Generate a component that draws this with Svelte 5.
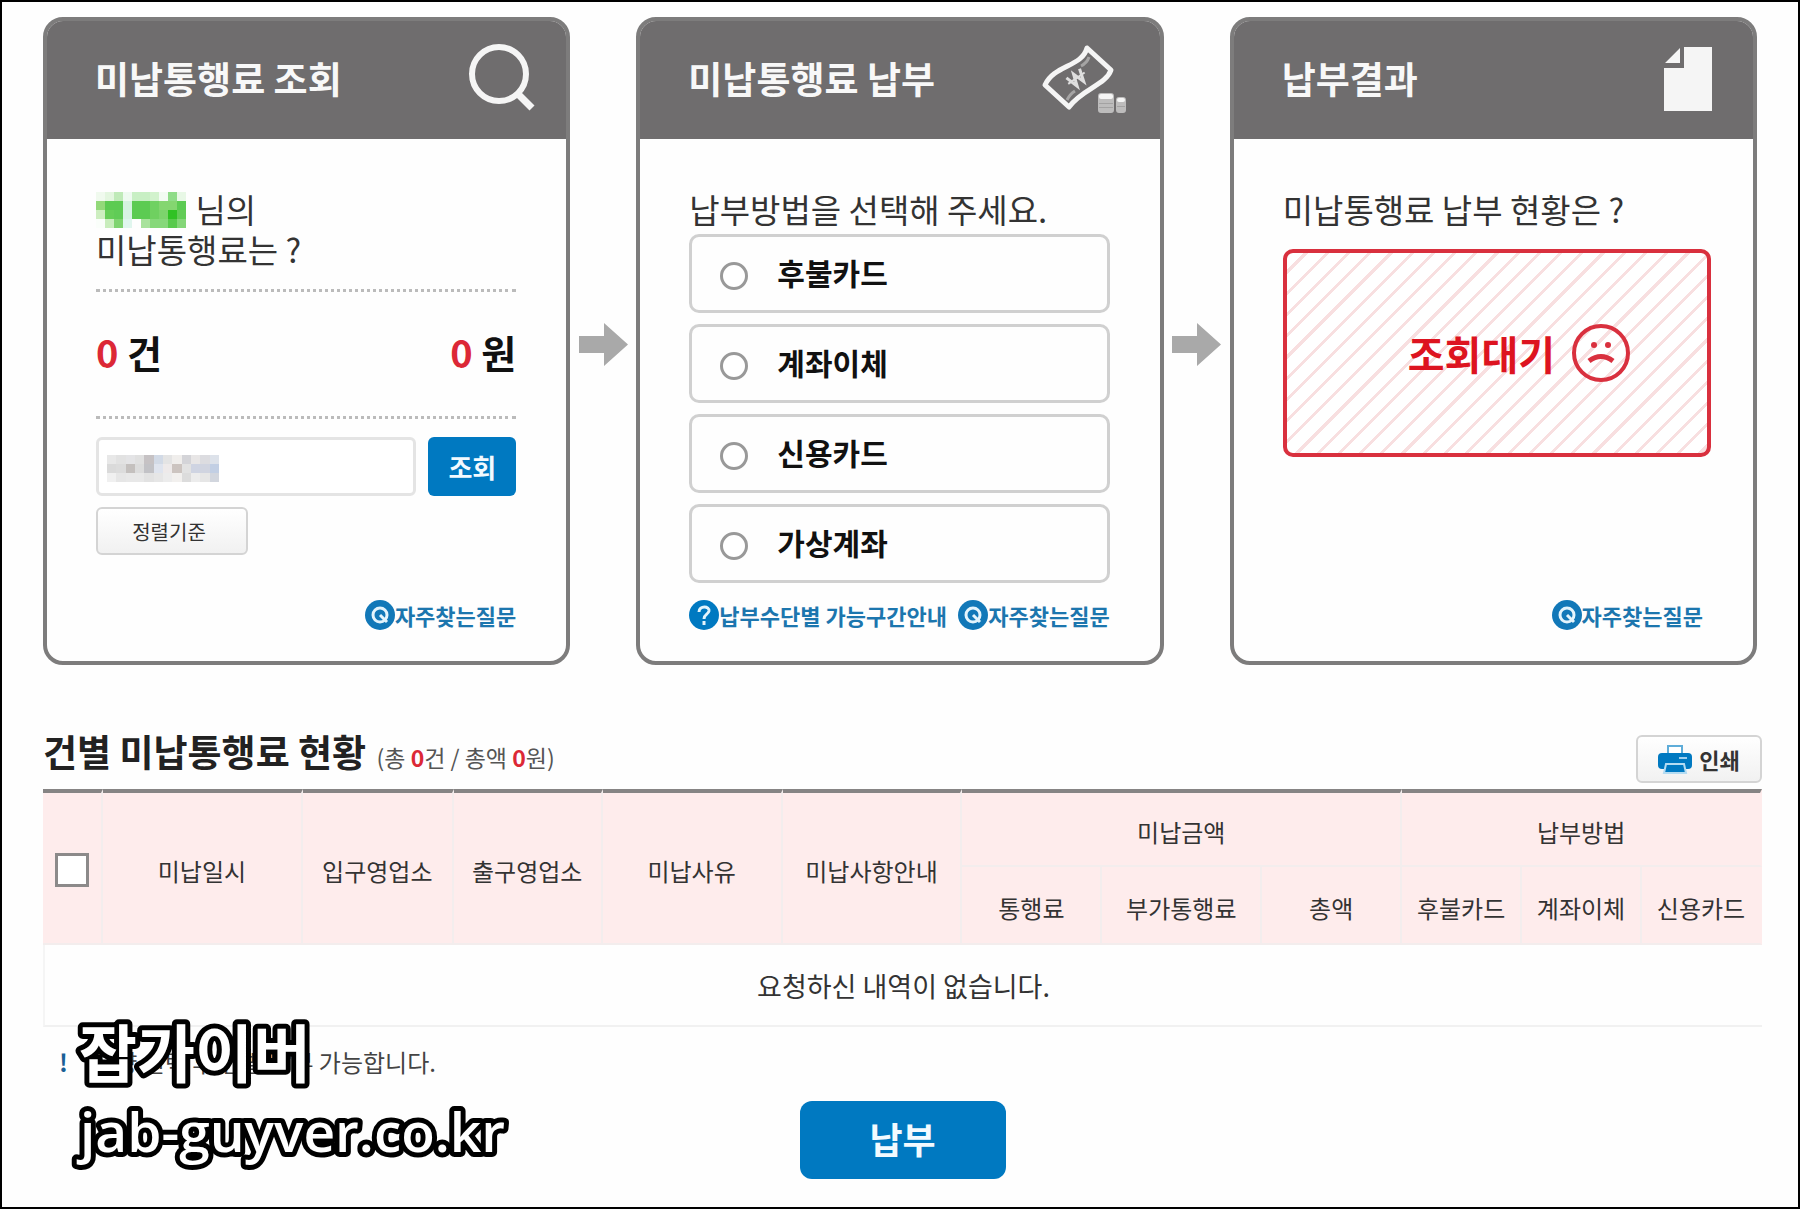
<script>
  const options = [
    { value: 'postpaid', label: '후불카드' },
    { value: 'transfer', label: '계좌이체' },
    { value: 'credit', label: '신용카드' },
    { value: 'virtual', label: '가상계좌' },
  ];
  const columnWidths = [60, 200, 151, 149, 180, 180, 140, 160, 140, 120, 120, 120];
  const totalWidth = columnWidths.reduce((sum, width) => sum + width, 0);
  const mainColumns = ['미납일시', '입구영업소', '출구영업소', '미납사유', '미납사항안내'];
  const subColumns = ['통행료', '부가통행료', '총액', '후불카드', '계좌이체', '신용카드'];

  // masked personal data, drawn as rows of coloured cells
  const nameMask = [
    ['#f0faee', '#e3f6df', '#bfeab8', '#eefaf0', '#c8efc4', '#c8efc4', '#d2f2cd', '#f2fbf2', '#8fdc88', '#e8f8e6'],
    ['#93d97a', '#5ccb52', '#5ccb52', '#d4f3de', '#5ccb52', '#5ccb52', '#70d162', '#84d670', '#84d670', '#5ccb52'],
    ['#cdeec0', '#66ce58', '#60cc56', '#d8f4e4', '#5ccb52', '#5ccb52', '#6fd060', '#7cd46c', '#30c224', '#62cc56'],
    ['#fafefa', '#c8edbc', '#7fd470', '#e0f6ee', '#fefefe', '#a8e29c', '#86d87a', '#86d87a', '#58ca4c', '#84d678'],
  ];
  const plateMask = [
    ['#e8e8e8', '#e2e2e2', '#e4e4e6', '#e0e0e0', '#c6c2c4', '#d2dae6', '#e4e4e4', '#f0eeec', '#d4d4d8', '#e8e6e6', '#dcdce0', '#dde2ea'],
    ['#dadada', '#dcdcdc', '#c4c0be', '#dcdcdc', '#c2c2c6', '#dfe4ee', '#eeeaea', '#ccc4c0', '#e2e2e2', '#cfd4e2', '#d0d4e0', '#c2cfe4'],
    ['#f0f0f0', '#e6e6e6', '#e8e8e8', '#e8e8e8', '#e2e2e2', '#e6e6e6', '#ececec', '#f2f0ee', '#dcdcdc', '#ececec', '#e6e6e6', '#d2d6de'],
  ];

  let method = '';
  let checkedAll = false;
  let plate = '';
</script>

{#snippet faq()}
  <a class="link" href="#faq">
    <svg width="30" height="30" viewBox="0 0 30 30" aria-hidden="true">
      <circle cx="15" cy="15" r="15" fill="#1278b8" />
      <circle cx="15" cy="15" r="7" fill="none" stroke="#e4f4fc" stroke-width="3" />
      <path d="M15 15l7 7" stroke="#e4f4fc" stroke-width="3" />
    </svg>자주찾는질문</a>
{/snippet}

{#snippet arrow()}
  <svg class="arrow" width="49" height="43" viewBox="0 0 49 43" aria-hidden="true">
    <path d="M0 13h25V0l24 21.500L25 43V30H0z" fill="#a9a9a9" />
  </svg>
{/snippet}

<div class="page">
  <main>
    <div class="steps">
      <section class="card">
        <header>
          <h2>미납통행료 조회</h2>
          <svg width="68" height="68" viewBox="0 0 68 68" fill="none" stroke="#f5f5f5" aria-hidden="true">
            <circle cx="31" cy="30" r="27" stroke-width="6" />
            <path d="M49 49l15 15" stroke-width="7" />
          </svg>
        </header>
        <div class="body">
          <p class="prompt">
            <svg class="mask" width="90" height="36" viewBox="0 0 10 4" preserveAspectRatio="none" shape-rendering="crispEdges" aria-hidden="true">
              {#each nameMask as row, y}
                {#each row as fill, x}
                  <rect {x} {y} width="1" height="1" {fill} />
                {/each}
              {/each}
            </svg>
            님의<br />미납통행료는 ?
          </p>
          <div class="totals">
            <strong><em>0</em> 건</strong>
            <strong><em>0</em> 원</strong>
          </div>
          <form class="search" on:submit|preventDefault>
            <div class="plate">
              <input type="text" aria-label="차량번호" bind:value={plate} />
              {#if !plate}
                <svg width="112" height="27" viewBox="0 0 12 3" preserveAspectRatio="none" shape-rendering="crispEdges" aria-hidden="true">
                  {#each plateMask as row, y}
                    {#each row as fill, x}
                      <rect {x} {y} width="1" height="1" {fill} />
                    {/each}
                  {/each}
                </svg>
              {/if}
            </div>
            <button class="primary">조회</button>
          </form>
          <button class="plain sort">정렬기준</button>
          <div class="links end">{@render faq()}</div>
        </div>
      </section>

      {@render arrow()}

      <section class="card">
        <header>
          <h2>미납통행료 납부</h2>
          <svg width="90" height="70" viewBox="0 0 90 70" fill="none" stroke="#f5f5f5" aria-hidden="true">
            <path d="M47 5L71 27C66 42 42 46 29 64L5 42C14 22 42 24 47 5z" stroke-width="5" stroke-linejoin="round" />
            <g transform="rotate(-35 37 36)" stroke="#dedede" stroke-width="3">
              <path d="M29 29l4 13 4-12 4 12 4-13" />
              <path d="M27 35h20" stroke-width="2" />
            </g>
            <path d="M41 23q6-3 8-9M27 57q3-6 8-9" stroke="#a5a4a4" stroke-width="3" />
            <g stroke="none">
              <rect x="58" y="50" width="16" height="20" rx="3" fill="#bdbcbc" />
              <rect x="59" y="51" width="14" height="5" rx="2" fill="#f5f5f5" />
              <rect x="76" y="54" width="10" height="16" rx="3" fill="#bdbcbc" />
              <rect x="77" y="55" width="8" height="4" rx="2" fill="#f5f5f5" />
              <path d="M59 60h14v1H59zM59 64h14v1H59zM77 63h8v1h-8z" fill="#a3a2a2" />
            </g>
          </svg>
        </header>
        <div class="body">
          <p class="prompt">납부방법을 선택해 주세요.</p>
          <div class="options">
            {#each options as option}
              <label>
                <input type="radio" name="method" value={option.value} bind:group={method} />
                {option.label}
              </label>
            {/each}
          </div>
          <div class="links">
            <a class="link" href="#guide">
              <svg width="30" height="30" viewBox="0 0 30 30" aria-hidden="true">
                <circle cx="15" cy="15" r="15" fill="#0079c1" />
                <path d="M10 12c0-7 11-6 10-1-1 4-5 3-5 8M15 21v4" fill="none" stroke="#e4f4fc" stroke-width="3" />
              </svg>납부수단별 가능구간안내</a>
            {@render faq()}
          </div>
        </div>
      </section>

      {@render arrow()}

      <section class="card result">
        <header>
          <h2>납부결과</h2>
          <svg width="48" height="66" viewBox="0 0 48 66" fill="#f5f5f5" aria-hidden="true">
            <path d="M20 2h28v64H0V23h20zM16 3v15H1z" />
          </svg>
        </header>
        <div class="body">
          <p class="prompt">미납통행료 납부 현황은 ?</p>
          <div class="status">
            조회대기
            <svg width="60" height="60" viewBox="0 0 60 60" fill="none" stroke="#d9303e" aria-hidden="true">
              <circle cx="30" cy="30" r="27" stroke-width="4" />
              <path d="M18 38q12-9 24 0" stroke-width="5" />
              <circle cx="23" cy="22" r="3" fill="#d9303e" stroke="none" />
              <circle cx="37" cy="22" r="3" fill="#d9303e" stroke="none" />
            </svg>
          </div>
          <div class="links end">{@render faq()}</div>
        </div>
      </section>
    </div>

    <div class="list-head">
      <h1>건별 미납통행료 현황 <small>(총 <em>0</em>건 / 총액 <em>0</em>원)</small></h1>
      <button class="plain print">
        <svg width="34" height="30" viewBox="0 0 34 30" aria-hidden="true">
          <path d="M10 10V2h14v8" fill="#fff" stroke="#5fadd9" stroke-width="2" />
          <rect y="9" width="34" height="16" rx="4" fill="#0079c1" />
          <path d="M21 14h8" stroke="#9fd0ee" stroke-width="2" />
          <path d="M8 20h18l2 9H6z" fill="#0079c1" stroke="#b5dcf2" stroke-width="2" />
        </svg>인쇄</button>
    </div>

    <table>
      <colgroup>
        {#each columnWidths as width}
          <col style={`width:${(width / totalWidth) * 100}%`} />
        {/each}
      </colgroup>
      <thead>
        <tr class="top">
          <th rowspan="2"><input type="checkbox" aria-label="전체 선택" bind:checked={checkedAll} /></th>
          {#each mainColumns as column}
            <th rowspan="2">{column}</th>
          {/each}
          <th colspan="3">미납금액</th>
          <th colspan="3">납부방법</th>
        </tr>
        <tr>
          {#each subColumns as column}
            <th>{column}</th>
          {/each}
        </tr>
      </thead>
      <tbody>
        <tr><td colspan="12">요청하신 내역이 없습니다.</td></tr>
      </tbody>
    </table>

    <p class="note"><b>!</b> 차량 선택 후 건별 납부 가능합니다.</p>
    <button class="primary pay">납부</button>
  </main>

  <svg class="watermark" width="460" height="200">
    <text class="korean" x="15" y="90">잡가이버</text>
    <text class="latin" x="16" y="165">jab-guyver.co.kr</text>
  </svg>
</div>

<style>
  :global(body) {
    margin: 0;
    background: #fff;
  }

  .page {
    position: relative;
    box-sizing: border-box;
    min-height: 100vh;
    border: 2px solid #000;
    background: #fefefe;
    color: #333;
    font-family: 'Noto Sans CJK KR', sans-serif;
  }

  main {
    padding: 15px 36px 20px 41px;
  }

  h1, h2, p {
    margin: 0;
  }

  em {
    color: #dc2836;
    font-style: normal;
    font-weight: bold;
  }

  button, input {
    box-sizing: border-box;
    margin: 0;
    font-family: inherit;
  }

  button {
    padding: 0;
    cursor: pointer;
  }

  .steps {
    display: grid;
    grid-template-columns: 1fr 66px 1fr 66px 1fr;
    margin-right: 5px;
  }

  .card {
    box-sizing: border-box;
    display: flex;
    flex-direction: column;
    height: 648px;
    overflow: hidden;
    border: 4px solid #7d7c7c;
    border-radius: 20px;
  }

  .card header {
    display: flex;
    align-items: center;
    justify-content: space-between;
    flex: none;
    height: 122px;
    margin: -4px -4px 0;
    padding: 0 34px 0 52px;
    background: #6f6d6e;
  }

  .card h2 {
    color: #f8f8f8;
    font-size: 37px;
    line-height: 48px;
  }

  .result header {
    padding-right: 45px;
  }

  .body {
    display: flex;
    flex-direction: column;
    flex: 1;
    padding: 50px 50px 30px 49px;
  }

  .result .body {
    padding-right: 42px;
  }

  .prompt {
    font-size: 33px;
    line-height: 40px;
  }

  .mask {
    margin-right: 2px;
    vertical-align: -5px;
  }

  .arrow {
    align-self: center;
    justify-self: center;
    padding-top: 6px;
  }

  .totals {
    display: flex;
    justify-content: space-between;
    margin-top: 20px;
    padding: 34px 0 38px;
    border-top: 3px dotted #bbb;
    border-bottom: 3px dotted #bbb;
    color: #111;
    font-size: 38px;
    line-height: 52px;
  }

  .search {
    display: flex;
    gap: 12px;
    margin-top: 18px;
  }

  .plate {
    position: relative;
    flex: 1;
  }

  .plate input {
    width: 100%;
    height: 59px;
    padding: 0 10px;
    border: 3px solid #e4e4e4;
    border-radius: 6px;
    background: #fff;
    font-size: 24px;
  }

  .plate svg {
    position: absolute;
    top: 18px;
    left: 11px;
    pointer-events: none;
  }

  .primary {
    border: 0;
    border-radius: 6px;
    background: #0079c1;
    color: #f2faff;
    font-size: 26px;
    font-weight: bold;
  }

  .search .primary {
    width: 88px;
  }

  .plain {
    border: 2px solid #d4d4d4;
    border-radius: 6px;
    background: linear-gradient(#fff, #f1f1f1);
    color: #333;
  }

  .sort {
    width: 152px;
    height: 48px;
    margin-top: 11px;
    padding-right: 6px;
    font-size: 20px;
  }

  .options {
    display: flex;
    flex-direction: column;
    gap: 11px;
    margin-top: 5px;
  }

  .options label {
    box-sizing: border-box;
    display: flex;
    align-items: center;
    gap: 29px;
    height: 79px;
    padding: 0 28px 4px;
    border: 3px solid #d0d0d0;
    border-radius: 10px;
    color: #111;
    font-size: 30px;
    font-weight: bold;
  }

  .options input {
    appearance: none;
    width: 28px;
    height: 28px;
    margin-top: 8px;
    border: 3px solid #999;
    border-radius: 50%;
    background: #fff;
  }

  .options input:checked {
    background: #0079c1;
  }

  .links {
    display: flex;
    justify-content: space-between;
    margin-top: auto;
  }

  .links.end {
    justify-content: flex-end;
  }

  .result .links {
    padding-right: 8px;
  }

  .link {
    display: flex;
    align-items: center;
    color: #1c76ae;
    font-size: 22px;
    font-weight: bold;
    line-height: 32px;
    text-decoration: none;
    white-space: nowrap;
  }

  .status {
    box-sizing: border-box;
    display: flex;
    align-items: center;
    justify-content: flex-end;
    gap: 16px;
    height: 208px;
    margin-top: 20px;
    padding-right: 76px;
    border: 4px solid #d9303e;
    border-radius: 10px;
    background: repeating-linear-gradient(135deg, #fff 0 12px, #f8dfe0 12px 15px);
    color: #dd1420;
    font-size: 40px;
    font-weight: bold;
  }

  .list-head {
    display: flex;
    align-items: center;
    justify-content: space-between;
    height: 60px;
    margin-top: 64px;
  }

  h1 {
    padding-bottom: 10px;
    color: #222;
    font-size: 37px;
    line-height: 48px;
  }

  small {
    margin-left: 2px;
    color: #555;
    font-size: 23px;
    font-weight: normal;
  }

  .print {
    display: flex;
    align-items: center;
    justify-content: center;
    gap: 7px;
    width: 126px;
    height: 48px;
    font-size: 22px;
    font-weight: bold;
  }

  table {
    width: 100%;
    table-layout: fixed;
    border-spacing: 0;
  }

  th {
    box-sizing: border-box;
    height: 78px;
    padding: 4px 0 0;
    border-right: 2px solid #f3eded;
    border-bottom: 2px solid #f3eded;
    background: #feecec;
    font-size: 24px;
    font-weight: normal;
  }

  th:last-child {
    border-right-color: #feecec;
  }

  .top th {
    border-top: 4px solid #868484;
  }

  th input {
    appearance: none;
    display: block;
    width: 34px;
    height: 34px;
    margin: 0 auto;
    border: 3px solid #8c8a8a;
    background: #fff;
  }

  th input:checked {
    background: #0079c1;
  }

  td {
    height: 80px;
    padding: 0;
    border-bottom: 2px solid #f1f1f1;
    border-left: 2px solid #f5f5f5;
    font-size: 27px;
    text-align: center;
  }

  .note {
    margin-top: 17px;
    padding-left: 16px;
    color: #444;
    font-size: 24px;
    line-height: 36px;
  }

  .note b {
    margin-right: 20px;
    color: #1a5f96;
  }

  .pay {
    display: block;
    width: 206px;
    height: 78px;
    margin: 21px auto 0;
    padding-bottom: 4px;
    border-radius: 12px;
    font-size: 36px;
  }

  .watermark {
    position: absolute;
    left: 62px;
    bottom: 20px;
  }

  .watermark text {
    fill: #fff;
    stroke: #000;
    stroke-width: 10px;
    stroke-linejoin: round;
    paint-order: stroke fill;
  }

  .korean {
    font-size: 63px;
    font-weight: bold;
  }

  .latin {
    font-family: 'Open Sans', sans-serif;
    font-size: 55px;
    font-weight: 600;
  }
</style>
